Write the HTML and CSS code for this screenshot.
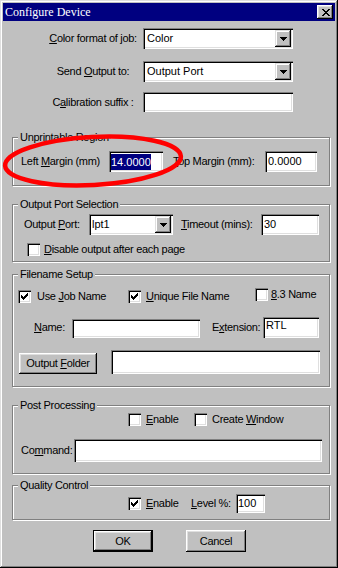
FILE: index.html
```html
<!DOCTYPE html>
<html>
<head>
<meta charset="utf-8">
<link rel="stylesheet" href="styles.css">
</head>
<body>
<div class="window">
  <div class="titlebar">
    <span class="title">Configure Device</span>
    <span class="close-btn"><svg width="8" height="7" viewBox="0 0 8 7"><path d="M0 0h2v1H0zM6 0h2v1H6zM1 1h2v1H1zM5 1h2v1H5zM2 2h4v1H2zM3 3h2v1H3zM2 4h4v1H2zM1 5h2v1H1zM5 5h2v1H5zM0 6h2v1H0zM6 6h2v1H6z"/></svg></span>
  </div>
  <div class="client">
    <div class="top-form">
      <div class="form-row">
        <span class="form-label"><u>C</u>olor format of job:</span>
        <div class="field combo combo-top"><span class="field-text">Color</span><span class="drop-btn"><svg width="7" height="4" viewBox="0 0 7 4"><path d="M0 0h7v1H0zM1 1h5v1H1zM2 2h3v1H2zM3 3h1v1H3z"/></svg></span></div>
      </div>
      <div class="form-row form-row-2">
        <span class="form-label">Send <u>O</u>utput to:</span>
        <div class="field combo combo-top"><span class="field-text">Output Port</span><span class="drop-btn"><svg width="7" height="4" viewBox="0 0 7 4"><path d="M0 0h7v1H0zM1 1h5v1H1zM2 2h3v1H2zM3 3h1v1H3z"/></svg></span></div>
      </div>
      <div class="form-row form-row-3">
        <span class="form-label">C<u>a</u>libration suffix :</span>
        <div class="field edit-top"></div>
      </div>
    </div>

    <div class="group group-unprintable">
      <div class="group-title">Unprintable Region</div>
      <div class="row margins-row">
        <span class="lm-label">Left <u>M</u>argin (mm)</span>
        <div class="field lm-input"><span class="sel-text">14.0000</span></div>
        <span class="tm-label"><u>T</u>op Margin (mm):</span>
        <div class="field edit tm-input"><span class="field-text">0.0000</span></div>
      </div>
    </div>

    <div class="group group-port">
      <div class="group-title">Output Port Selection</div>
      <div class="row port-row">
        <span class="port-label">Output <u>P</u>ort:</span>
        <div class="field combo port-combo"><span class="field-text">lpt1</span><span class="drop-btn"><svg width="7" height="4" viewBox="0 0 7 4"><path d="M0 0h7v1H0zM1 1h5v1H1zM2 2h3v1H2zM3 3h1v1H3z"/></svg></span></div>
        <span class="timeout-label"><u>T</u>imeout (mins):</span>
        <div class="field edit timeout-input"><span class="field-text">30</span></div>
      </div>
      <div class="row disable-row">
        <div class="check-item">
          <span class="check-box"></span>
          <span class="check-label"><u>D</u>isable output after each page</span>
        </div>
      </div>
    </div>

    <div class="group group-filename">
      <div class="group-title">Filename Setup</div>
      <div class="row fn-checks">
        <div class="check-item ci-jobname">
          <span class="check-box"><svg width="7" height="7" viewBox="0 0 7 7"><path d="M6 0h1v1H6zM5 1h2v1H5zM0 2h1v1H0zM4 2h3v1H4zM0 3h2v1H0zM3 3h3v1H3zM0 4h5v1H0zM1 5h3v1H1zM2 6h1v1H2z"/></svg></span>
          <span class="check-label check-label-wide">Use <u>J</u>ob Name</span>
        </div>
        <div class="check-item ci-unique">
          <span class="check-box"><svg width="7" height="7" viewBox="0 0 7 7"><path d="M6 0h1v1H6zM5 1h2v1H5zM0 2h1v1H0zM4 2h3v1H4zM0 3h2v1H0zM3 3h3v1H3zM0 4h5v1H0zM1 5h3v1H1zM2 6h1v1H2z"/></svg></span>
          <span class="check-label"><u>U</u>nique File Name</span>
        </div>
        <div class="check-item ci-83">
          <span class="check-box"></span>
          <span class="check-label check-label-narrow"><u>8</u>.3 Name</span>
        </div>
      </div>
      <div class="row name-row">
        <span class="name-label"><u>N</u>ame:</span>
        <div class="field name-input"></div>
        <span class="ext-label">E<u>x</u>tension:</span>
        <div class="field edit ext-input"><span class="field-text">RTL</span></div>
      </div>
      <div class="row folder-row">
        <span class="btn folder-btn"><span>Output <u>F</u>older</span></span>
        <div class="field folder-input"></div>
      </div>
    </div>

    <div class="group group-post">
      <div class="group-title">Post Processing</div>
      <div class="row pp-checks">
        <div class="check-item ci-enable-pp">
          <span class="check-box"></span>
          <span class="check-label"><u>E</u>nable</span>
        </div>
        <div class="check-item">
          <span class="check-box"></span>
          <span class="check-label">Create <u>W</u>indow</span>
        </div>
      </div>
      <div class="row cmd-row">
        <span class="cmd-label">Co<u>m</u>mand:</span>
        <div class="field cmd-input"></div>
      </div>
    </div>

    <div class="group group-quality">
      <div class="group-title">Quality Control</div>
      <div class="row qc-row">
        <div class="check-item ci-enable-qc">
          <span class="check-box"><svg width="7" height="7" viewBox="0 0 7 7"><path d="M6 0h1v1H6zM5 1h2v1H5zM0 2h1v1H0zM4 2h3v1H4zM0 3h2v1H0zM3 3h3v1H3zM0 4h5v1H0zM1 5h3v1H1zM2 6h1v1H2z"/></svg></span>
          <span class="check-label"><u>E</u>nable</span>
        </div>
        <span class="level-label"><u>L</u>evel %:</span>
        <div class="field edit level-input"><span class="field-text">100</span></div>
      </div>
    </div>

    <div class="button-row">
      <span class="btn btn-default"><span>OK</span></span>
      <span class="btn btn-cancel"><span>Cancel</span></span>
    </div>
  </div>

  <svg class="annotation" width="338" height="568" viewBox="0 0 338 568">
    <ellipse cx="93" cy="161" rx="88" ry="24" transform="rotate(-3 93 161)" fill="none" stroke="#ff0000" stroke-width="4.5"/>
  </svg>
</div>
</body>
</html>
```

FILE: styles.css
```css
* {
  box-sizing: border-box;
}

body {
  margin: 0;
  background: #c0c0c0;
  font-family: "Liberation Sans", Arial, sans-serif;
  font-size: 11px;
  line-height: 13px;
  letter-spacing: -0.3px;
  color: #000;
}

u {
  text-underline-offset: 1px;
}

.window {
  position: relative;
  width: 338px;
  height: 568px;
  padding: 3px;
  background: #c0c0c0;
  box-shadow: inset -1px -1px #000, inset 1px 1px #dfdfdf, inset -2px -2px #808080, inset 2px 2px #fff;
}

.titlebar {
  display: flex;
  height: 18px;
  background: #000080;
}

.title {
  color: #fff;
  font-family: "Liberation Serif", "Times New Roman", serif;
  font-size: 12px;
  letter-spacing: 0;
  line-height: 18px;
  padding-left: 2px;
}

.close-btn {
  display: flex;
  align-items: center;
  justify-content: center;
  width: 16px;
  height: 14px;
  margin: 2px 2px 0 auto;
  padding-left: 1px;
  background: #c0c0c0;
  box-shadow: inset -1px -1px #000, inset 1px 1px #fff, inset -2px -2px #808080, inset 2px 2px #dfdfdf;
}

.close-btn svg,
.drop-btn svg,
.check-box svg {
  display: block;
}

/* ---------- controls ---------- */

.field {
  display: flex;
  align-items: center;
  background: #fff;
  padding: 0 2px 0 3px;
  letter-spacing: 0;
  box-shadow: inset 1px 1px #808080, inset 2px 2px #000, inset -1px -1px #fff, inset -2px -2px #dfdfdf;
}

.field-text {
  white-space: nowrap;
}

.combo {
  padding-left: 4px;
}

.drop-btn {
  display: flex;
  align-items: center;
  justify-content: center;
  width: 16px;
  height: calc(100% - 4px);
  margin-left: auto;
  background: #c0c0c0;
  box-shadow: inset -1px -1px #000, inset 1px 1px #dfdfdf, inset -2px -2px #808080, inset 2px 2px #fff;
}

.sel-text {
  display: inline-block;
  background: #000080;
  color: #fff;
  line-height: 16px;
}

.check-item {
  display: flex;
  align-items: center;
  height: 13px;
}

.check-box {
  display: flex;
  align-items: center;
  justify-content: center;
  flex-shrink: 0;
  width: 13px;
  height: 13px;
  background: #fff;
  box-shadow: inset 1px 1px #808080, inset 2px 2px #000, inset -1px -1px #fff, inset -2px -2px #dfdfdf;
}

.check-label {
  margin-left: 5px;
  white-space: nowrap;
}

.check-label-wide {
  margin-left: 6px;
}

.check-label-narrow {
  margin-left: 3px;
}

.btn {
  display: flex;
  align-items: center;
  justify-content: center;
  background: #c0c0c0;
  white-space: nowrap;
  box-shadow: inset -1px -1px #000, inset 1px 1px #fff, inset -2px -2px #808080, inset 2px 2px #dfdfdf;
}

/* ---------- top form ---------- */

.top-form {
  padding-top: 7px;
}

.form-row {
  display: flex;
  padding-left: 42px;
}

.form-row-2 {
  margin-top: 12px;
}

.form-row-3 {
  margin-top: 10px;
}

.form-label {
  width: 96px;
  text-align: center;
  line-height: 21px;
  white-space: nowrap;
}

.combo-top {
  width: 150px;
  height: 21px;
  margin-left: 2px;
}

.edit-top {
  width: 150px;
  height: 20px;
  margin-left: 2px;
}

/* ---------- group boxes ---------- */

.group {
  width: 318px;
  margin-left: 9px;
  border: 1px solid #808080;
  box-shadow: inset 1px 1px #fff, 1px 1px #fff;
}

.group-title {
  width: fit-content;
  margin: -7px 0 0 5px;
  padding: 0 2px;
  background: #c0c0c0;
  line-height: 13px;
  white-space: nowrap;
}

.row {
  display: flex;
  align-items: center;
}

.row > span {
  white-space: nowrap;
}

/* Unprintable region */
.group-unprintable {
  margin-top: 24px;
  padding: 0 0 13px 0;
}

.margins-row {
  margin-top: 7px;
  padding-left: 8px;
  height: 21px;
}

.lm-label {
  width: 88px;
}

.lm-input {
  width: 54px;
  height: 21px;
  padding-left: 2px;
}

.tm-label {
  width: 92px;
  margin-left: 10px;
}

.tm-input {
  width: 52px;
  height: 21px;
}

/* Output port */
.group-port {
  margin-top: 18px;
  padding-bottom: 5px;
}

.port-row {
  margin-top: 3px;
  padding-left: 11px;
  height: 21px;
}

.port-label {
  width: 65px;
}

.port-combo {
  width: 84px;
  height: 21px;
  padding-left: 3px;
}

.timeout-label {
  width: 80px;
  margin-left: 8px;
}

.timeout-input {
  width: 58px;
  height: 21px;
}

.disable-row {
  margin-top: 8px;
  padding-left: 14px;
  height: 13px;
}

.disable-row .check-label {
  margin-left: 4px;
}

/* Filename setup */
.group-filename {
  margin-top: 12px;
  padding-bottom: 12px;
}

.fn-checks {
  margin-top: 9px;
  padding-left: 5px;
  height: 13px;
  align-items: flex-start;
}

.ci-jobname {
  width: 110px;
}

.ci-unique {
  width: 127px;
}

.ci-83 {
  margin-top: -2px;
}

.name-row {
  margin-top: 14px;
  padding-left: 21px;
  height: 21px;
  align-items: flex-start;
}

.name-label {
  width: 38px;
  line-height: 21px;
}

.name-input {
  width: 128px;
  height: 19px;
  margin-top: 2px;
}

.ext-label {
  width: 51px;
  margin-left: 12px;
  line-height: 21px;
}

.ext-input {
  width: 56px;
  height: 21px;
  align-items: flex-start;
  padding-top: 2px;
}

.folder-row {
  margin-top: 12px;
  padding-left: 6px;
  height: 24px;
  align-items: flex-end;
}

.folder-btn {
  width: 78px;
  height: 21px;
}

.folder-input {
  width: 209px;
  height: 24px;
  margin-left: 14px;
}

/* Post processing */
.group-post {
  margin-top: 18px;
  padding-bottom: 11px;
}

.pp-checks {
  margin-top: 1px;
  padding-left: 115px;
  height: 13px;
}

.ci-enable-pp {
  width: 66px;
}

.cmd-row {
  margin-top: 13px;
  padding-left: 8px;
  height: 23px;
}

.cmd-label {
  width: 53px;
}

.cmd-input {
  width: 248px;
  height: 23px;
}

/* Quality control */
.group-quality {
  margin-top: 11px;
  padding-bottom: 6px;
}

.qc-row {
  margin-top: 2px;
  padding-left: 115px;
  height: 19px;
}

.ci-enable-qc {
  width: 63px;
}

.level-label {
  width: 45px;
}

.level-input {
  width: 29px;
  height: 19px;
  padding-left: 2px;
}

/* Buttons */
.button-row {
  display: flex;
  margin-top: 10px;
  padding-left: 90px;
}

.button-row .btn {
  width: 60px;
  height: 22px;
}

.btn-default {
  border: 1px solid #000;
}

.btn-cancel {
  margin-left: 33px;
}

.annotation {
  position: absolute;
  top: 0;
  left: 0;
  pointer-events: none;
}
```
